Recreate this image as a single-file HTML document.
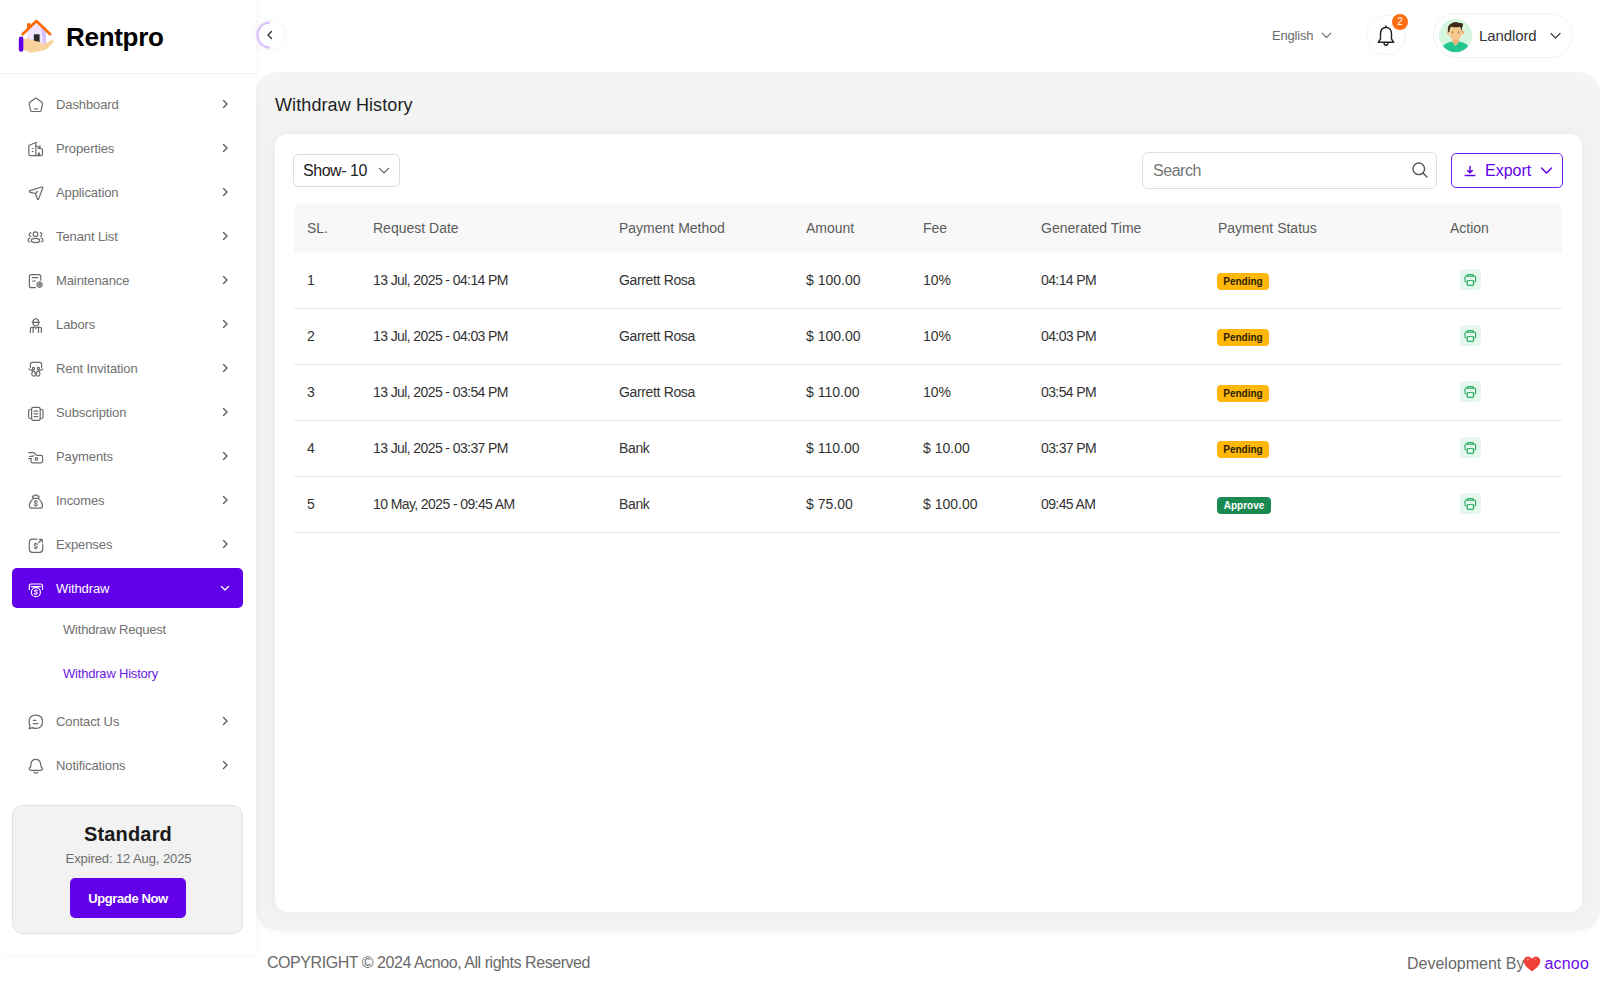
<!DOCTYPE html>
<html><head><meta charset="utf-8">
<style>
*{box-sizing:border-box;margin:0;padding:0}
html,body{width:1600px;height:995px;overflow:hidden;background:#fff;font-family:"Liberation Sans",sans-serif;color:#222}
.abs{position:absolute}
svg{display:block;width:100%;height:100%}
#sidebar{position:absolute;left:0;top:0;width:256px;height:955px;background:#fff;box-shadow:1px 1px 6px rgba(0,0,0,0.04)}
#logo{position:absolute;left:0;top:0;width:256px;height:74px;border-bottom:1px solid #f1f1f1}
.mi{position:absolute;left:12px;width:231px;height:40px;border-radius:5px;color:#6a6a6a}
.mi .ic{position:absolute;left:12px;top:8px;width:24px;height:24px;display:block}
.mi .tx{position:absolute;left:44px;top:1px;line-height:40px;font-size:13px;color:#707070;letter-spacing:-0.1px}
.mi .ch{position:absolute;left:209px;top:15px;width:8px;height:10px;display:block;color:#555}
.mi .chd{position:absolute;left:208px;top:16px;width:10px;height:8px;display:block;color:#fff}
.act-mi{background:#6200ea;color:#fff}
.act-mi .tx{color:#fff}
.sub{position:absolute;left:63px;margin-top:1px;font-size:13px;color:#707070;line-height:20px;letter-spacing:-0.2px}
.subact{color:#6a1be0}
#main{position:absolute;left:256px;top:72px;width:1344px;height:859px;background:linear-gradient(#f4f4f4,#f3f3f3 8%,#f3f3f3);border-radius:22px;box-shadow:0 3px 8px rgba(0,0,0,0.025)}
#card{position:absolute;left:275px;top:134px;width:1307px;height:778px;background:#fff;border-radius:12px;box-shadow:0 0 22px rgba(0,0,0,0.04)}
.th{position:absolute;top:204px;height:48px;line-height:48px;font-size:14px;color:#5c5c5c}
.td{position:absolute;font-size:14px;color:#333;line-height:20px;letter-spacing:-0.3px}
.rowline{position:absolute;left:294px;width:1268px;height:1px;background:#e3e6ea}
.badge{position:absolute;height:17px;line-height:17px;border-radius:4px;font-size:10px;font-weight:bold;padding:0 6px}
.pend{background:#ffb80a;color:#2b2200}
.appr{background:#1b8a52;color:#fff}
.act{position:absolute;left:1460px;width:21px;height:21px;border-radius:4px;background:#e5f6ec}
</style></head>
<body>
<div id="main"></div>
<div id="sidebar">
  <div id="logo"></div>
<div class="mi" style="top:84px"><span class="ic"><svg viewBox="0 0 24 24" fill="none" stroke="currentColor" stroke-width="1.2" stroke-linecap="round" stroke-linejoin="round"><path d="M10.9 6.4 Q11.8 5.8 12.7 6.4 L17.9 10.3 Q18.7 10.9 18.5 11.8 L17.1 18.3 Q16.8 19.5 15.6 19.5 H8.1 Q6.9 19.5 6.6 18.3 L5.2 11.8 Q5 10.9 5.8 10.3 Z"/><path d="M10.6 16.9 H13.2"/></svg></span><span class="tx">Dashboard</span><span class="ch"><svg viewBox="0 0 8 10" fill="none" stroke="currentColor" stroke-width="1.3" stroke-linecap="round" stroke-linejoin="round"><path d="M2.5 1.5 L6 5 L2.5 8.5"/></svg></span></div>
<div class="mi" style="top:128px"><span class="ic"><svg viewBox="0 0 24 24" fill="none" stroke="currentColor" stroke-width="1.2" stroke-linecap="round" stroke-linejoin="round"><path d="M12.5 6.3 L4.8 9.5 V18 Q4.8 19.6 6.4 19.6 H17 Q18.5 19.6 18.5 18 V13.2 L11.8 9.8"/><path d="M11.8 6.6 V19.6"/><path d="M15.9 9.6 V11.2"/><path d="M8.3 12.5 H9 M8.3 15.4 H9 M14.2 12.4 H15.6"/><path d="M14.4 19.6 V17.2 H15.5 V19.6"/></svg></span><span class="tx">Properties</span><span class="ch"><svg viewBox="0 0 8 10" fill="none" stroke="currentColor" stroke-width="1.3" stroke-linecap="round" stroke-linejoin="round"><path d="M2.5 1.5 L6 5 L2.5 8.5"/></svg></span></div>
<div class="mi" style="top:172px"><span class="ic"><svg viewBox="0 0 24 24" fill="none" stroke="currentColor" stroke-width="1.2" stroke-linecap="round" stroke-linejoin="round"><path d="M17.8 7 L6 10.6 Q5 11 5.6 11.8 Q5.9 12.2 6.5 12.3 L11.5 13.5 L13.4 19 Q13.9 20.3 14.6 19.1 L18.7 8 Q19 6.7 17.8 7 Z"/><path d="M11.5 13.5 L13.5 11.3"/></svg></span><span class="tx">Application</span><span class="ch"><svg viewBox="0 0 8 10" fill="none" stroke="currentColor" stroke-width="1.3" stroke-linecap="round" stroke-linejoin="round"><path d="M2.5 1.5 L6 5 L2.5 8.5"/></svg></span></div>
<div class="mi" style="top:216px"><span class="ic"><svg viewBox="0 0 24 24" fill="none" stroke="currentColor" stroke-width="1.2" stroke-linecap="round" stroke-linejoin="round"><circle cx="11.5" cy="10.2" r="2.3"/><path d="M11.5 14.4 Q15.8 14.4 15.8 16.6 Q15.8 18.6 11.5 18.6 Q7.2 18.6 7.2 16.6 Q7.2 14.4 11.5 14.4 Z"/><path d="M6.8 8.6 Q5.2 9 5.3 10.6 Q5.5 12.2 6.8 12.4"/><path d="M16.3 8.6 Q17.9 9 17.8 10.6 Q17.6 12.2 16.3 12.4"/><path d="M5.8 14.2 Q4 14.6 4 16.2 Q4.1 17.6 5.5 18"/><path d="M17.2 14.2 Q19 14.6 19 16.2 Q18.9 17.6 17.5 18"/></svg></span><span class="tx">Tenant List</span><span class="ch"><svg viewBox="0 0 8 10" fill="none" stroke="currentColor" stroke-width="1.3" stroke-linecap="round" stroke-linejoin="round"><path d="M2.5 1.5 L6 5 L2.5 8.5"/></svg></span></div>
<div class="mi" style="top:260px"><span class="ic"><svg viewBox="0 0 24 24" fill="none" stroke="currentColor" stroke-width="1.2" stroke-linecap="round" stroke-linejoin="round"><path d="M16.8 12.2 V8.6 Q16.8 6.6 14.8 6.6 H7.4 Q5.4 6.6 5.4 8.6 V17.7 Q5.4 19.7 7.4 19.7 H11.5"/><path d="M8.5 9.7 H13.6 M8.5 13 H11.4"/><path d="M15.6 13.8 L18 15.2 V18 L15.6 19.4 L13.2 18 V15.2 Z"/><circle cx="15.6" cy="16.6" r="0.9"/></svg></span><span class="tx">Maintenance</span><span class="ch"><svg viewBox="0 0 8 10" fill="none" stroke="currentColor" stroke-width="1.3" stroke-linecap="round" stroke-linejoin="round"><path d="M2.5 1.5 L6 5 L2.5 8.5"/></svg></span></div>
<div class="mi" style="top:304px"><span class="ic"><svg viewBox="0 0 24 24" fill="none" stroke="currentColor" stroke-width="1.2" stroke-linecap="round" stroke-linejoin="round"><path d="M11.8 6.5 Q14.7 7.3 14.7 10.4 Q14.7 13.8 11.8 13.8 Q8.9 13.8 8.9 10.4 Q8.9 7.3 11.8 6.5 Z"/><path d="M8.3 10.4 H15.3"/><path d="M6.4 20.4 V16.6 Q6.4 15.3 7.8 15.3 H10.5 L11.8 16.4 L13.1 15.3 H16 Q17.4 15.3 17.4 16.6 V20.4"/><path d="M9.1 15.6 V20.4 M14.5 15.6 V20.4"/></svg></span><span class="tx">Labors</span><span class="ch"><svg viewBox="0 0 8 10" fill="none" stroke="currentColor" stroke-width="1.3" stroke-linecap="round" stroke-linejoin="round"><path d="M2.5 1.5 L6 5 L2.5 8.5"/></svg></span></div>
<div class="mi" style="top:348px"><span class="ic"><svg viewBox="0 0 24 24" fill="none" stroke="currentColor" stroke-width="1.2" stroke-linecap="round" stroke-linejoin="round"><path d="M6.4 11.4 V8.4 Q6.4 6.4 8.4 6.4 H15.6 Q17.6 6.4 17.6 8.4 V11.4"/><circle cx="9.4" cy="12.5" r="1.1"/><circle cx="14.4" cy="12.5" r="1.1"/><path d="M4.9 13 Q8 14.8 10.3 15.2 Q11.6 16.4 11.4 18.5 Q11.1 20.3 9.6 20.2 Q8 20 7.8 18.2 Q7.7 16.4 8.6 15.3"/><path d="M18.8 13 Q15.7 14.8 13.4 15.2 Q12.1 16.4 12.3 18.5 Q12.6 20.3 14.1 20.2 Q15.7 20 15.9 18.2 Q16 16.4 15.1 15.3"/></svg></span><span class="tx">Rent Invitation</span><span class="ch"><svg viewBox="0 0 8 10" fill="none" stroke="currentColor" stroke-width="1.3" stroke-linecap="round" stroke-linejoin="round"><path d="M2.5 1.5 L6 5 L2.5 8.5"/></svg></span></div>
<div class="mi" style="top:392px"><span class="ic"><svg viewBox="0 0 24 24" fill="none" stroke="currentColor" stroke-width="1.2" stroke-linecap="round" stroke-linejoin="round"><rect x="7.6" y="7.4" width="8.6" height="13" rx="1.6"/><path d="M7.6 9.5 H6.2 Q4.6 9.6 4.6 11 V17 Q4.6 18.5 6.2 18.5 H7.6 M16.2 9.5 H17.5 Q19 9.6 19 11 V17 Q19 18.5 17.5 18.5 H16.2"/><path d="M10 11.2 H13.7 M10 13.8 H13.7 M10 16.6 H13.7"/></svg></span><span class="tx">Subscription</span><span class="ch"><svg viewBox="0 0 8 10" fill="none" stroke="currentColor" stroke-width="1.3" stroke-linecap="round" stroke-linejoin="round"><path d="M2.5 1.5 L6 5 L2.5 8.5"/></svg></span></div>
<div class="mi" style="top:436px"><span class="ic"><svg viewBox="0 0 24 24" fill="none" stroke="currentColor" stroke-width="1.2" stroke-linecap="round" stroke-linejoin="round"><path d="M13.2 11.4 H17 Q18.6 11.4 18.6 13 V17.3 Q18.6 18.8 17 18.8 H8.6 Q7 18.8 7 17.3 V14.6"/><path d="M4.6 8.6 H9.8 L12.6 11.2"/><path d="M5.4 12.3 H8.2 Q9.6 12.2 9.8 11.3 M4.6 14.6 H7.2"/><circle cx="12.4" cy="14.9" r="1.3"/></svg></span><span class="tx">Payments</span><span class="ch"><svg viewBox="0 0 8 10" fill="none" stroke="currentColor" stroke-width="1.3" stroke-linecap="round" stroke-linejoin="round"><path d="M2.5 1.5 L6 5 L2.5 8.5"/></svg></span></div>
<div class="mi" style="top:480px"><span class="ic"><svg viewBox="0 0 24 24" fill="none" stroke="currentColor" stroke-width="1.2" stroke-linecap="round" stroke-linejoin="round"><path d="M9.2 10.3 L8.4 8.4 Q10 8 11.7 6.6 Q13.4 8 15 8.4 L14.6 10.3 Z"/><path d="M9.2 10.6 Q5.4 14 5.3 17.4 Q5.4 20.2 8.3 20.2 H15.6 Q18.5 20.2 18.5 17.4 Q18.3 14 14.6 10.6"/><path d="M13.3 13.7 Q12.8 13 11.8 13 Q10.4 13.1 10.5 14.2 Q10.7 15 11.9 15.3 Q13.3 15.6 13.2 16.6 Q13 17.5 11.8 17.5 Q10.8 17.5 10.3 16.8 M11.8 12.3 V13 M11.8 17.5 V18.2"/></svg></span><span class="tx">Incomes</span><span class="ch"><svg viewBox="0 0 8 10" fill="none" stroke="currentColor" stroke-width="1.3" stroke-linecap="round" stroke-linejoin="round"><path d="M2.5 1.5 L6 5 L2.5 8.5"/></svg></span></div>
<div class="mi" style="top:524px"><span class="ic"><svg viewBox="0 0 24 24" fill="none" stroke="currentColor" stroke-width="1.2" stroke-linecap="round" stroke-linejoin="round"><path d="M12.9 7.2 H8.3 Q5.3 7.2 5.3 10.2 V17.3 Q5.3 20.3 8.3 20.3 H15.7 Q18.7 20.3 18.7 17.3 V12.5"/><path d="M14.6 10.6 L17.9 7.4 M15.4 7.3 H17.8 Q18.3 7.4 18.3 7.9 V10.4"/><path d="M13.3 12.4 Q12.7 11.6 11.7 11.7 Q10.3 11.8 10.4 12.9 Q10.6 13.7 11.8 14 Q13.2 14.3 13.1 15.3 Q12.9 16.2 11.7 16.2 Q10.7 16.2 10.2 15.5 M11.7 11 V11.7 M11.7 16.2 V16.9"/></svg></span><span class="tx">Expenses</span><span class="ch"><svg viewBox="0 0 8 10" fill="none" stroke="currentColor" stroke-width="1.3" stroke-linecap="round" stroke-linejoin="round"><path d="M2.5 1.5 L6 5 L2.5 8.5"/></svg></span></div>
<div class="mi act-mi" style="top:568px"><span class="ic"><svg viewBox="0 0 24 24" fill="none" stroke="currentColor" stroke-width="1.2" stroke-linecap="round" stroke-linejoin="round"><path d="M5.3 13.5 V9.8 Q5.3 8 7.2 8 H16.6 Q18.5 8 18.5 9.8 V13.5"/><path d="M7.3 10.6 H16.4"/><circle cx="11.9" cy="16.2" r="4.5"/><path d="M13.2 14.6 Q12.7 14 11.9 14 Q10.7 14.1 10.8 15.1 Q11 15.8 11.9 16 Q13.1 16.3 13 17.3 Q12.8 18.2 11.8 18.2 Q10.9 18.2 10.5 17.6"/></svg></span><span class="tx">Withdraw</span><span class="chd"><svg viewBox="0 0 10 8" fill="none" stroke="currentColor" stroke-width="1.4" stroke-linecap="round" stroke-linejoin="round"><path d="M1.5 2.5 L5 6 L8.5 2.5"/></svg></span></div>
<div class="mi" style="top:701px"><span class="ic"><svg viewBox="0 0 24 24" fill="none" stroke="currentColor" stroke-width="1.2" stroke-linecap="round" stroke-linejoin="round"><path d="M11.8 6.2 Q18.5 6.2 18.5 12.8 Q18.5 19.4 11.8 19.4 Q10 19.4 8.4 18.6 L5.6 19.6 Q5 19.6 5.3 18.9 L6 16.4 Q5.1 14.8 5.1 12.8 Q5.1 6.2 11.8 6.2 Z"/><path d="M9.4 11.3 H11.8 M9.3 14.6 H14"/></svg></span><span class="tx">Contact Us</span><span class="ch"><svg viewBox="0 0 8 10" fill="none" stroke="currentColor" stroke-width="1.3" stroke-linecap="round" stroke-linejoin="round"><path d="M2.5 1.5 L6 5 L2.5 8.5"/></svg></span></div>
<div class="mi" style="top:745px"><span class="ic"><svg viewBox="0 0 24 24" fill="none" stroke="currentColor" stroke-width="1.2" stroke-linecap="round" stroke-linejoin="round"><path d="M11.8 6.4 Q15.9 6.4 16.5 10.5 L17 13.6 Q17.2 14.2 17.8 14.6 Q18.8 15.3 18.4 16.3 Q18 17.3 16.6 17.3 H7.1 Q5.7 17.3 5.3 16.3 Q4.9 15.3 5.9 14.6 Q6.5 14.2 6.6 13.6 L7.1 10.5 Q7.7 6.4 11.8 6.4 Z"/><path d="M10 19.2 Q11.8 21.4 13.6 19.2"/></svg></span><span class="tx">Notifications</span><span class="ch"><svg viewBox="0 0 8 10" fill="none" stroke="currentColor" stroke-width="1.3" stroke-linecap="round" stroke-linejoin="round"><path d="M2.5 1.5 L6 5 L2.5 8.5"/></svg></span></div>
<div class="sub" style="top:619px">Withdraw Request</div>
<div class="sub subact" style="top:663px">Withdraw History</div>
  <div class="abs" style="left:12px;top:805px;width:231px;height:129px;background:#f2f2f2;border:1px solid #e3e3e3;border-radius:10px"></div>
  <div class="abs" style="left:12px;top:822px;width:232px;text-align:center;font-size:20px;font-weight:bold;color:#1a1a1a;line-height:24px;letter-spacing:0.15px">Standard</div>
  <div class="abs" style="left:13px;top:851px;width:231px;text-align:center;font-size:13px;color:#6e6e6e;line-height:16px;letter-spacing:-0.1px">Expired: 12 Aug, 2025</div>
  <div class="abs" style="left:70px;top:878px;width:116px;height:40px;background:#6200ea;border-radius:5px;color:#fff;font-weight:bold;font-size:13px;line-height:42px;text-align:center;letter-spacing:-0.4px">Upgrade Now</div>
</div>
<svg class="abs" style="left:14px;top:16px;width:44px;height:40px" viewBox="14 16 44 40">
<path d="M27 27 L36.4 19.8 L46 27.5 V45 H27 Z" fill="#efe6ff"/>
<path d="M41 24 L46 27.5 V45 H43 Z" fill="#d6c4ff"/>
<rect x="33.8" y="34.3" width="5.8" height="8" fill="#2a2a2a"/>
<path d="M27 23.2 H30.6 V27.5 L27 30.5 Z" fill="#ff6a00"/>
<path d="M22.6 34.3 L36.4 21 L50.2 34.3" fill="none" stroke="#ff6a00" stroke-width="2.6" stroke-linecap="round" stroke-linejoin="round"/>
<path d="M23.5 39 Q27 38 31 39.5 Q35 41 40 42 Q41.5 44.5 45 43.5 L52 40 Q54.5 39.5 53.5 42 L48 48 Q46 50 43 50.5 L32 52.5 Q30 52.5 28 51.5 L23.5 50 Z" fill="#f9d39d"/>
<rect x="18.8" y="36.6" width="4.6" height="15.2" rx="2.3" fill="#6200ea"/>
</svg>
<div class="abs" style="left:66px;top:21px;font-size:26px;font-weight:bold;color:#000;line-height:32px;letter-spacing:-0.3px">Rentpro</div>
<!-- collapse button -->
<div class="abs" style="left:256px;top:21px;width:28px;height:28px;border-radius:50%;background:#fff;box-shadow:0 0 8px rgba(0,0,0,0.06)"></div>
<svg class="abs" style="left:256px;top:21px;width:28px;height:28px" viewBox="0 0 28 28"><path d="M14 1.5 A12.5 12.5 0 0 0 14 26.5" fill="none" stroke="#dcc8fa" stroke-width="2.6"/><path d="M15.5 10.5 L12 14 L15.5 17.5" fill="none" stroke="#333" stroke-width="1.4" stroke-linecap="round" stroke-linejoin="round"/></svg>

<!-- header right -->
<div class="abs" style="left:1272px;top:28px;font-size:13px;color:#6b6b6b;line-height:16px;letter-spacing:-0.2px">English</div>
<svg class="abs" style="left:1321px;top:32px;width:11px;height:7px" viewBox="0 0 11 7"><path d="M1.2 1.2 L5.5 5.5 L9.8 1.2" fill="none" stroke="#777" stroke-width="1.2" stroke-linecap="round" stroke-linejoin="round"/></svg>
<div class="abs" style="left:1366px;top:15px;width:40px;height:40px;border-radius:50%;border:1px solid #f3f3f3;background:#fff"></div>
<svg class="abs" style="left:1376px;top:25px;width:20px;height:22px" viewBox="0 0 20 22"><path d="M10 2.5 Q4.5 2.5 4.5 9 V14 L2.2 17.3 H17.8 L15.5 14 V9 Q15.5 2.5 10 2.5 Z" fill="none" stroke="#222" stroke-width="1.4" stroke-linejoin="round"/><path d="M10 1 V2.5" stroke="#222" stroke-width="1.4" stroke-linecap="round"/><path d="M8 17.5 Q8 20.2 10 20.2 Q12 20.2 12 17.5" fill="none" stroke="#222" stroke-width="1.4"/></svg>
<div class="abs" style="left:1392px;top:14px;width:16px;height:16px;border-radius:50%;background:#ff6d13;color:#fff;font-size:10px;line-height:16px;text-align:center">2</div>
<div class="abs" style="left:1433px;top:13px;width:140px;height:45px;border-radius:23px;border:1px solid #f2f2f2;background:#fff"></div>
<svg class="abs" style="left:1436px;top:16px;width:40px;height:40px" viewBox="0 0 995 995">
<defs><clipPath id="av"><circle cx="487" cy="487" r="412"/></clipPath></defs>
<circle cx="487" cy="487" r="412" fill="#d6f6df"/>
<g clip-path="url(#av)">
<path d="M170 750 Q240 660 400 632 L487 740 L575 632 Q740 660 805 750 Q720 905 487 905 Q260 905 170 750 Z" fill="#24c690"/>
<path d="M405 540 L405 640 L487 740 L570 640 L570 540 Z" fill="#f0b07a"/>
<ellipse cx="305" cy="410" rx="34" ry="50" fill="#eeb07a"/><ellipse cx="668" cy="410" rx="34" ry="50" fill="#eeb07a"/>
<ellipse cx="487" cy="430" rx="152" ry="178" fill="#f6c68c"/>
<path d="M300 390 Q270 240 370 190 Q460 130 560 165 Q630 165 672 195 Q668 250 645 290 L645 390 Q625 300 590 265 Q480 300 370 265 Q345 300 335 395 Z" fill="#3e2914"/>
<ellipse cx="412" cy="405" rx="14" ry="26" fill="#7a5535"/><ellipse cx="560" cy="405" rx="14" ry="26" fill="#7a5535"/>
</g></svg>
<div class="abs" style="left:1479px;top:27px;font-size:15px;color:#333;line-height:18px;letter-spacing:-0.1px">Landlord</div>
<svg class="abs" style="left:1550px;top:32px;width:11px;height:8px" viewBox="0 0 11 8"><path d="M1 1.5 L5.5 6 L10 1.5" fill="none" stroke="#444" stroke-width="1.3" stroke-linecap="round" stroke-linejoin="round"/></svg>

<!-- page title -->
<div class="abs" style="left:275px;top:94px;font-size:18px;color:#1f1f1f;line-height:22px;letter-spacing:0.1px">Withdraw History</div>
<div id="card"></div>

<!-- controls -->
<div class="abs" style="left:293px;top:154px;width:107px;height:33px;border:1px solid #dcdcdc;border-radius:5px;background:#fff"></div>
<div class="abs" style="left:303px;top:162px;font-size:16px;color:#222;line-height:18px;letter-spacing:-0.45px">Show- 10</div>
<svg class="abs" style="left:378px;top:166px;width:12px;height:9px" viewBox="0 0 12 9"><path d="M1.5 2.3 L6 6.8 L10.5 2.3" fill="none" stroke="#555" stroke-width="1.15" stroke-linecap="round" stroke-linejoin="round"/></svg>

<div class="abs" style="left:1142px;top:152px;width:295px;height:37px;border:1px solid #dedede;border-radius:6px;background:#fff"></div>
<div class="abs" style="left:1153px;top:162px;font-size:16px;color:#757575;line-height:18px;letter-spacing:-0.45px">Search</div>
<svg class="abs" style="left:1411px;top:161px;width:18px;height:18px" viewBox="0 0 18 18"><circle cx="7.8" cy="7.8" r="5.8" fill="none" stroke="#555" stroke-width="1.4"/><path d="M12 12 L16 16" stroke="#555" stroke-width="1.4" stroke-linecap="round"/></svg>

<div class="abs" style="left:1451px;top:153px;width:112px;height:35px;border:1.4px solid #7020ee;border-radius:5px;background:#fff"></div>
<svg class="abs" style="left:1463px;top:164px;width:14px;height:13px" viewBox="0 0 14 13"><path d="M7 2.5 V8.5 M4.8 6.6 L7 8.8 L9.2 6.6 M2.2 11.4 H11.8" fill="none" stroke="#6200ea" stroke-width="1.5" stroke-linecap="round" stroke-linejoin="round"/></svg>
<div class="abs" style="left:1485px;top:162px;font-size:16px;color:#6200ea;line-height:18px">Export</div>
<svg class="abs" style="left:1540px;top:166px;width:13px;height:9px" viewBox="0 0 13 9"><path d="M1.5 2 L6.5 7 L11.5 2" fill="none" stroke="#6200ea" stroke-width="1.5" stroke-linecap="round" stroke-linejoin="round"/></svg>

<div class="abs" style="left:294px;top:204px;width:1268px;height:48px;background:#f8f8f8;border-radius:4px 4px 0 0"></div>
<div class="th" style="left:307px">SL.</div>
<div class="th" style="left:373px">Request Date</div>
<div class="th" style="left:619px">Payment Method</div>
<div class="th" style="left:806px">Amount</div>
<div class="th" style="left:923px">Fee</div>
<div class="th" style="left:1041px">Generated Time</div>
<div class="th" style="left:1218px">Payment Status</div>
<div class="th" style="left:1450px">Action</div>
<div class="td" style="left:307px;top:270px;letter-spacing:0px">1</div>
<div class="td" style="left:373px;top:270px;letter-spacing:-0.6px">13 Jul, 2025 - 04:14 PM</div>
<div class="td" style="left:619px;top:270px;letter-spacing:-0.35px">Garrett Rosa</div>
<div class="td" style="left:806px;top:270px;letter-spacing:0px">$ 100.00</div>
<div class="td" style="left:923px;top:270px;letter-spacing:0px">10%</div>
<div class="td" style="left:1041px;top:270px;letter-spacing:-0.6px">04:14 PM</div>
<div class="badge pend" style="left:1217px;top:273px;width:52px;text-align:center;padding:0">Pending</div>
<div class="act" style="top:269px"></div><span class="abs" style="left:1456px;top:266px;width:28px;height:28px;display:block"><svg viewBox="0 0 28 28" fill="none" stroke="#2fb068" stroke-width="1.2" stroke-linecap="round" stroke-linejoin="round"><path d="M11.3 10.1 V8.9 Q11.3 8.5 11.7 8.5 H16.8 Q17.2 8.5 17.2 8.9 V10.1"/><path d="M11 16 H10.5 Q9 16 9 14.5 V11.6 Q9 10.1 10.5 10.1 H18.2 Q19.7 10.1 19.7 11.6 V14.5 Q19.7 16 18.2 16 H17.6"/><rect x="11.3" y="14.5" width="6.2" height="4.9" rx="0.7"/></svg></span>
<div class="rowline" style="top:308px;width:1268px"></div>
<div class="td" style="left:307px;top:326px;letter-spacing:0px">2</div>
<div class="td" style="left:373px;top:326px;letter-spacing:-0.6px">13 Jul, 2025 - 04:03 PM</div>
<div class="td" style="left:619px;top:326px;letter-spacing:-0.35px">Garrett Rosa</div>
<div class="td" style="left:806px;top:326px;letter-spacing:0px">$ 100.00</div>
<div class="td" style="left:923px;top:326px;letter-spacing:0px">10%</div>
<div class="td" style="left:1041px;top:326px;letter-spacing:-0.6px">04:03 PM</div>
<div class="badge pend" style="left:1217px;top:329px;width:52px;text-align:center;padding:0">Pending</div>
<div class="act" style="top:325px"></div><span class="abs" style="left:1456px;top:322px;width:28px;height:28px;display:block"><svg viewBox="0 0 28 28" fill="none" stroke="#2fb068" stroke-width="1.2" stroke-linecap="round" stroke-linejoin="round"><path d="M11.3 10.1 V8.9 Q11.3 8.5 11.7 8.5 H16.8 Q17.2 8.5 17.2 8.9 V10.1"/><path d="M11 16 H10.5 Q9 16 9 14.5 V11.6 Q9 10.1 10.5 10.1 H18.2 Q19.7 10.1 19.7 11.6 V14.5 Q19.7 16 18.2 16 H17.6"/><rect x="11.3" y="14.5" width="6.2" height="4.9" rx="0.7"/></svg></span>
<div class="rowline" style="top:364px;width:1268px"></div>
<div class="td" style="left:307px;top:382px;letter-spacing:0px">3</div>
<div class="td" style="left:373px;top:382px;letter-spacing:-0.6px">13 Jul, 2025 - 03:54 PM</div>
<div class="td" style="left:619px;top:382px;letter-spacing:-0.35px">Garrett Rosa</div>
<div class="td" style="left:806px;top:382px;letter-spacing:0px">$ 110.00</div>
<div class="td" style="left:923px;top:382px;letter-spacing:0px">10%</div>
<div class="td" style="left:1041px;top:382px;letter-spacing:-0.6px">03:54 PM</div>
<div class="badge pend" style="left:1217px;top:385px;width:52px;text-align:center;padding:0">Pending</div>
<div class="act" style="top:381px"></div><span class="abs" style="left:1456px;top:378px;width:28px;height:28px;display:block"><svg viewBox="0 0 28 28" fill="none" stroke="#2fb068" stroke-width="1.2" stroke-linecap="round" stroke-linejoin="round"><path d="M11.3 10.1 V8.9 Q11.3 8.5 11.7 8.5 H16.8 Q17.2 8.5 17.2 8.9 V10.1"/><path d="M11 16 H10.5 Q9 16 9 14.5 V11.6 Q9 10.1 10.5 10.1 H18.2 Q19.7 10.1 19.7 11.6 V14.5 Q19.7 16 18.2 16 H17.6"/><rect x="11.3" y="14.5" width="6.2" height="4.9" rx="0.7"/></svg></span>
<div class="rowline" style="top:420px;width:1268px"></div>
<div class="td" style="left:307px;top:438px;letter-spacing:0px">4</div>
<div class="td" style="left:373px;top:438px;letter-spacing:-0.6px">13 Jul, 2025 - 03:37 PM</div>
<div class="td" style="left:619px;top:438px;letter-spacing:-0.35px">Bank</div>
<div class="td" style="left:806px;top:438px;letter-spacing:0px">$ 110.00</div>
<div class="td" style="left:923px;top:438px;letter-spacing:0px">$ 10.00</div>
<div class="td" style="left:1041px;top:438px;letter-spacing:-0.6px">03:37 PM</div>
<div class="badge pend" style="left:1217px;top:441px;width:52px;text-align:center;padding:0">Pending</div>
<div class="act" style="top:437px"></div><span class="abs" style="left:1456px;top:434px;width:28px;height:28px;display:block"><svg viewBox="0 0 28 28" fill="none" stroke="#2fb068" stroke-width="1.2" stroke-linecap="round" stroke-linejoin="round"><path d="M11.3 10.1 V8.9 Q11.3 8.5 11.7 8.5 H16.8 Q17.2 8.5 17.2 8.9 V10.1"/><path d="M11 16 H10.5 Q9 16 9 14.5 V11.6 Q9 10.1 10.5 10.1 H18.2 Q19.7 10.1 19.7 11.6 V14.5 Q19.7 16 18.2 16 H17.6"/><rect x="11.3" y="14.5" width="6.2" height="4.9" rx="0.7"/></svg></span>
<div class="rowline" style="top:476px;width:1268px"></div>
<div class="td" style="left:307px;top:494px;letter-spacing:0px">5</div>
<div class="td" style="left:373px;top:494px;letter-spacing:-0.6px">10 May, 2025 - 09:45 AM</div>
<div class="td" style="left:619px;top:494px;letter-spacing:-0.35px">Bank</div>
<div class="td" style="left:806px;top:494px;letter-spacing:0px">$ 75.00</div>
<div class="td" style="left:923px;top:494px;letter-spacing:0px">$ 100.00</div>
<div class="td" style="left:1041px;top:494px;letter-spacing:-0.6px">09:45 AM</div>
<div class="badge appr" style="left:1217px;top:497px;width:54px;text-align:center;padding:0">Approve</div>
<div class="act" style="top:493px"></div><span class="abs" style="left:1456px;top:490px;width:28px;height:28px;display:block"><svg viewBox="0 0 28 28" fill="none" stroke="#2fb068" stroke-width="1.2" stroke-linecap="round" stroke-linejoin="round"><path d="M11.3 10.1 V8.9 Q11.3 8.5 11.7 8.5 H16.8 Q17.2 8.5 17.2 8.9 V10.1"/><path d="M11 16 H10.5 Q9 16 9 14.5 V11.6 Q9 10.1 10.5 10.1 H18.2 Q19.7 10.1 19.7 11.6 V14.5 Q19.7 16 18.2 16 H17.6"/><rect x="11.3" y="14.5" width="6.2" height="4.9" rx="0.7"/></svg></span>
<div class="rowline" style="top:532px;width:1266px"></div>

<!-- footer -->
<div class="abs" style="left:267px;top:953px;font-size:16px;color:#6a6a6a;line-height:20px;letter-spacing:-0.45px">COPYRIGHT © 2024 Acnoo, All rights Reserved</div>
<div class="abs" style="left:1407px;top:954px;font-size:16px;color:#6a6a6a;line-height:20px;white-space:nowrap">Development By<span style="display:inline-block;width:18px;height:16px;vertical-align:-3px;margin-left:-1px"><svg viewBox="0 0 20 18"><path d="M10 17.4 C4 13 0.7 9.6 0.7 5.6 C0.7 2.5 3 0.6 5.6 0.6 C7.5 0.6 9 1.7 10 3.3 C11 1.7 12.5 0.6 14.4 0.6 C17 0.6 19.3 2.5 19.3 5.6 C19.3 9.6 16 13 10 17.4 Z" fill="#ef4036"/><ellipse cx="5.2" cy="3.8" rx="1.6" ry="1" fill="#f9a09a" opacity="0.8" transform="rotate(-30 5.2 3.8)"/><ellipse cx="14" cy="3.4" rx="1.3" ry="0.8" fill="#f9a09a" opacity="0.6" transform="rotate(-30 14 3.4)"/></svg></span><span style="color:#6a08ee;margin-left:3px;letter-spacing:0.2px">acnoo</span></div>
</body></html>
